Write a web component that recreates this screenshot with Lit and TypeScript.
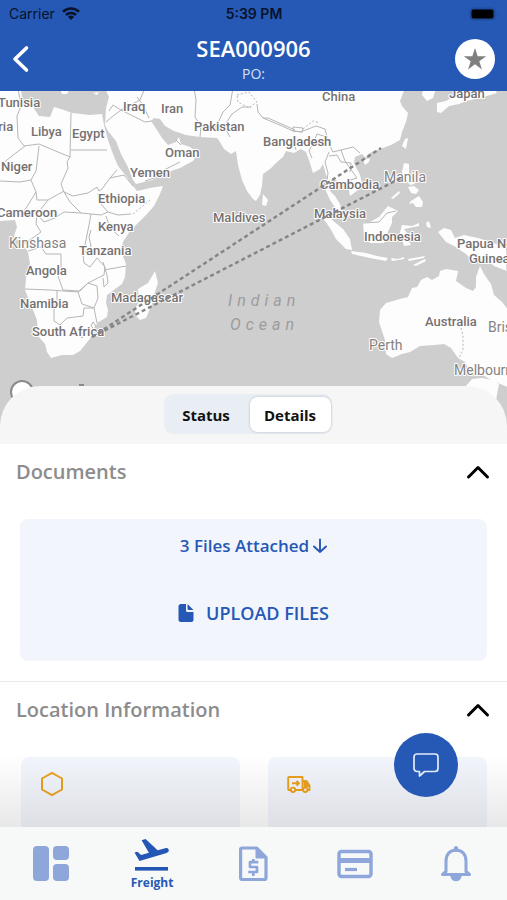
import { LitElement, html, css, svg } from "lit";
import { customElement, state } from "lit/decorators.js";

type Label = [text: string, x: number, y: number, kind?: string];

const LABELS: Label[] = [
  ["Tunisia", -2, 107],
  ["Algeria", -28, 131],
  ["Libya", 31, 136],
  ["Egypt", 72, 138],
  ["Iraq", 123, 111],
  ["Iran", 161, 113],
  ["Pakistan", 194, 131],
  ["Oman", 165, 157],
  ["Yemen", 130, 177],
  ["Niger", 1, 171],
  ["Ethiopia", 98, 203],
  ["Cameroon", -3, 217],
  ["Kenya", 98, 231],
  ["Maldives", 213, 222],
  ["China", 322, 101],
  ["Japan", 449, 98],
  ["Bangladesh", 263, 146],
  ["Cambodia", 320, 189],
  ["Manila", 384, 182, "city"],
  ["Malaysia", 314, 218],
  ["Indonesia", 364, 241],
  ["Kinshasa", 9, 248, "city"],
  ["Tanzania", 79, 255],
  ["Angola", 26, 275],
  ["Namibia", 20, 308],
  ["South Africa", 32, 336],
  ["Madagascar", 111, 302],
  ["Papua New", 457, 248],
  ["Guinea", 469, 263],
  ["Australia", 425, 326],
  ["Brisbane", 488, 332, "city"],
  ["Perth", 369, 350, "city"],
  ["Melbourne", 454, 375, "city"],
  ["Indian", 228, 306, "ocean"],
  ["Ocean", 230, 330, "ocean"],
];

const LAND = [
  // Africa
  "M0 88H21L22 100 33 107 39 116 50 117 54 107 64 110 72 113 90 115 102 114 104 125 108 140 113 154 118 166 127 177 133 186 137 191 150 188 163 186 160 194 154 206 147 214 130 231 123 242 121 251 126 264 125 277 122 284 107 295 106 303 108 310 107 317 97 323 94 332 89 340 80 351 73 355 62 355 51 358 47 352 45 344 38 336 37 320 31 305 25 290 26 278 30 264 28 252 22 244 14 236 17 227 15 220 0 221Z",
  // Arabia and Asia
  "M105 88H405L400 101 402 106 408 113 406 122 402 132 400 140 391 145 383 148 374 151 368 154 366 158 362 154 355 157 354 163 360 175 362 183 358 190 350 196 349 190 345 184 338 181 333 179 330 182 330 191 335 196 340 204 342 212 336 209 330 200 326 191 327 178 323 164 320 169 313 173 309 160 306 152 301 149 294 153 286 151 283 157 276 163 270 169 263 174 262 186 260 195 256 201 253 199 247 191 242 180 238 165 236 151 231 154 224 149 220 142 217 138 200 137 186 135 174 131 165 126 160 119 154 118 151 121 157 130 162 138 168 145 176 142 179 137 181 144 190 147 198 153 193 161 180 168 168 172 152 180 136 184 133 180 128 167 121 154 116 141 108 131 105 125 106 108 109 97Z",
  // Madagascar
  "M155 271L158 283 155 292 152 304 146 318 140 320 136 316 135 309 139 302 138 289 148 283Z",
  // Sri Lanka
  "M263 194L268 200 266 206 262 205Z",
  // Taiwan, Hainan, Korea, Japan
  "M405 139L408 138 406 149 402 146Z",
  "M363 160L370 158 369 162 365 165Z",
  "M423 88H436L433 98 427 101 422 95Z",
  "M437 103L446 101 453 97 463 94 480 92 494 88 497 93 480 98 466 101 459 104 449 106 441 113 437 112Z",
  // Philippines
  "M404 163L409 164 409 176 415 184 410 185 404 178 402 172Z",
  "M408 187L414 186 419 190 416 194 411 193Z",
  "M411 201L419 196 423 202 422 207 416 207 413 203 409 204Z",
  "M391 198L399 191 400 193 393 199Z",
  // Borneo, Sumatra, Java
  "M363 222L370 222 379 217 388 206 398 211 392 217 392 223 386 236 384 243 370 243 364 236Z",
  "M322 217L331 219 343 229 350 239 352 250 346 249 336 239 330 228Z",
  "M351 251L366 253 377 256 388 258 386 261 370 258 352 254Z",
  "M391 258L398 259 404 257 404 259 392 261Z",
  "M408 259L425 256 424 258 409 261Z",
  "M413 265L425 259 426 261 416 266Z",
  // Sulawesi and the Moluccas
  "M402 225L412 226 419 223 419 226 404 229 408 234 413 232 407 238 411 245 404 246 402 239 398 240Z",
  "M426 223L429 221 431 228 427 227Z",
  // New Guinea
  "M438 232L444 228 451 230 455 238 464 235 478 238 494 243 507 250V271L494 266 486 259 472 260 466 254 454 246 446 242Z",
  // Australia
  "M380 310L386 303 400 299 408 297 412 288 417 287 421 280 427 277 432 280 439 276 440 271 446 269 458 271 456 281 466 288 473 291 476 287 476 277 480 266 484 274 488 280 491 284 494 295 502 302 510 312V388L493 381 481 374 470 371 465 362 458 358 451 348 444 344 434 345 420 346 410 352 402 354 392 358 386 354 385 340 379 322Z",
  // Tasmania
  "M466 386L472 379 482 378 493 380 499 384 496 400 480 402Z",
];

const BORDERS = [
  "M18 88L21 106 17 116 18 138 24 146 39 144 70 157 71 113",
  "M71 150H107M70 157L67 162 68 168 61 184 64 192 70 202 81 213 91 214 89 225 84 250",
  "M25 146L3 163M39 146L36 171 31 180 20 182 0 181M31 180L36 192 37 200 48 200 64 191",
  "M64 192L73 196 88 193 97 187 99 191 102 189 110 178 117 170M110 178L124 175 133 186",
  "M36 192L28 205 20 217M48 200L37 214 44 222 55 218 64 212 81 213M37 214L36 224 41 232 34 237 24 244",
  "M91 214L101 215 108 212 100 203 98 193M108 212L118 215 131 214M106 216L110 228 119 236",
  "M91 230L89 237 91 246 83 254 84 263 90 267 97 258 105 267 104 275 88 283 80 291 63 290 58 276 61 269 61 254 46 254 41 247 28 251",
  "M25 289L50 290 78 292 88 283M57 291V304L54 305V321L60 325 67 318 83 316 84 308 94 308 97 323",
  "M78 292L82 304 94 308 98 298 97 286 88 283M104 270L126 266M103 262L107 275 108 283 104 287 103 278",
  "M93 322L96 326 94 329 91 326ZM80 334L86 333 82 338Z",
  "M106 122L113 116 121 110 113 105 109 111M121 110L145 122 152 121M121 110L140 100 145 88M149 118L143 105 137 97",
  "M194 88L196 100 195 117 201 126 200 137M201 126L216 127 223 112 230 105 233 88M230 137L224 126 232 114 242 107 251 107",
  "M145 181L160 176 168 172M158 173L180 162M176 140L181 145",
  "M257 104L258 112 263 118 282 126 293 131 303 132M263 118L268 118 295 130M293 127L303 128 302 132 293 131V127M293 139L296 150",
  "M303 131L316 126 325 129 327 137 317 134 313 143 309 151 312 158M327 137L329 144 333 152 341 150 353 147 360 153",
  "M329 152L325 162 328 173 326 187M329 156L337 155 341 162 351 163 350 172M341 150L345 161 352 171 357 178 350 180",
  "M363 223L379 222 387 213 396 211M507 244V270",
];

@customElement("freight-map")
export class FreightMap extends LitElement {
  static styles = css`
    :host { display: block; height: 340px; background: #cecece; }
    .map { display: block; width: 100%; height: 100%; }
    .land { fill: #fdfdfd; }
    .border { fill: none; stroke: #b6b6b6; stroke-width: 1; stroke-linejoin: round; }
    .disputed { stroke-dasharray: 2 2; }
    .route { stroke: #858585; stroke-width: 2.4; stroke-dasharray: 4 3; }
    .label {
      font: 500 13px Roboto, sans-serif; fill: #757171;
      stroke: #fff; stroke-width: 2px; stroke-linejoin: round; paint-order: stroke;
    }
    .city { font-weight: 400; font-size: 14px; fill: #858282; }
    .ocean { font-weight: 400; font-size: 16px; font-style: italic; letter-spacing: 5px; fill: #9c9c9c; stroke: none; }
    .logo { fill: #fff; stroke: #8a8a8a; stroke-width: 2; }
  `;
  render() {
    return html`<svg class="map" viewBox="0 91 507 340" preserveAspectRatio="xMidYMin slice" role="img" aria-label="Shipment route map">
      ${LAND.map((d) => svg`<path class="land" d=${d} />`)}
      <path class="land" d="M60 88h10l-3 6h-5zM93 93l6-1-2 3z" />
      ${BORDERS.map((d) => svg`<path class="border" d=${d} />`)}
      <path class="border disputed" d="M237 95l12-3 8 10-8 6-11-6zM303 129l10-8 7 2M150 200l-17 14M461 328l2 8v14l-4 8" />
      <circle class="logo" cx="22" cy="392" r="11" />
      <path d="M79 385h5" stroke="#8a8a8a" stroke-width="2" />
      ${LABELS.map(([t, x, y, k]) => svg`<text class="label ${k ?? ""}" x=${x} y=${y}>${t}</text>`)}
      <path class="route" d="M92 337L381 148" />
      <path class="route" d="M92 337L401 178" />
    </svg>`;
  }
}

const chevronUp = html`<svg width="24" height="16" viewBox="0 0 24 16" aria-hidden="true">
  <path d="M2.5 13L12 3.5 21.5 13" fill="none" stroke="#000" stroke-width="3" stroke-linecap="round" stroke-linejoin="round" /></svg>`;

const NAV = [
  { name: "Dashboard", label: "", icon: html`<svg width="36" height="36" viewBox="0 0 36 36" fill="#8ea6d9">
      <rect x="0" y="0" width="16" height="35" rx="4" /><rect x="20" y="0" width="16" height="14" rx="4" /><rect x="20" y="18" width="16" height="17" rx="4" /></svg>` },
  { name: "Freight", label: "Freight", icon: html`<svg width="36" height="34" viewBox="0 0 36 34" fill="#2456b6">
      <path d="M0.5 14.5l3-.8 3.6 3.2 7.8-2.1L7.6 2.2 11.600 1l12 11.200 7.600-2c1.700-.45 3.100.2 3.500 1.600.4 1.400-.5 2.600-2.100 3.100L5.500 23z" />
      <rect x="1" y="29" width="33" height="3.600" /></svg>` },
  { name: "Invoices", label: "", icon: html`<svg width="30" height="36" viewBox="0 0 30 36" fill="none" stroke="#8ea6d9" stroke-width="3.200" stroke-linejoin="round">
      <path d="M2.600 3.500a1.500 1.500 0 0 1 1.500-1.500H18.500L28 11.500V32a1.500 1.500 0 0 1-1.500 1.500H4.100A1.500 1.500 0 0 1 2.600 32z" />
      <path d="M18 2v10h10z" fill="#8ea6d9" stroke-width="1" />
      <path d="M20.300 16.200H12v4.800h7v5H10.200M15.300 13v3M15.300 26v4" stroke-width="2.700" stroke-linejoin="round" /></svg>` },
  { name: "Payments", label: "", icon: html`<svg width="36" height="36" viewBox="0 0 36 36">
      <rect x="2" y="5.500" width="32" height="25" rx="2.500" fill="none" stroke="#8ea6d9" stroke-width="3.400" />
      <path d="M2 12h32v5H2z" fill="#8ea6d9" /><path d="M8 23.500h12" stroke="#8ea6d9" stroke-width="3.200" /></svg>` },
  { name: "Notifications", label: "", icon: html`<svg width="32" height="36" viewBox="0 0 32 36" fill="none" stroke="#8ea6d9" stroke-width="3" stroke-linejoin="round">
      <path d="M6 25.500V15C6 8.500 10 4 16 4s10 4.500 10 11v10.500l3.500 3h-27z" /><path d="M16 4V2" stroke-linecap="round" stroke-width="4" />
      <path d="M10.500 30a5.500 5.200 0 0 0 11 0z" fill="#8ea6d9" stroke="none" /></svg>` },
];

@customElement("app-root")
export class AppRoot extends LitElement {
  @state() private tab = "Details";

  static styles = css`
    :host {
      display: flex; flex-direction: column; height: 100vh; background: #fff;
      font-family: "Open Sans", "Noto Sans", sans-serif; color: #111;
    }
    * { box-sizing: border-box; }
    button { font: inherit; color: inherit; border: 0; padding: 0; background: none; cursor: pointer; }
    svg { display: block; flex: none; }
    .header { flex: none; background: #2658b5; color: #fff; }
    .status { display: grid; grid-template-columns: 1fr auto 1fr; align-items: center; height: 27px; padding: 0 8px 0 9px; color: #07132b; font: 400 14px Inter, sans-serif; }
    .carrier { display: flex; align-items: center; gap: 7px; }
    .time { font-weight: 600; }
    .battery { justify-self: end; }
    .bar { display: grid; grid-template-columns: 40px 1fr 40px; align-items: center; height: 64px; padding: 0 12px; }
    .back { display: flex; align-items: center; height: 40px; }
    .titles { padding-top: 2px; text-align: center; }
    .title { margin: 0; font-size: 22px; line-height: 26px; font-weight: 600; }
    .po { margin: 2px 0 0; font-size: 14px; line-height: 22px; color: #d7e1f5; }
    .star { display: grid; place-items: center; width: 40px; height: 40px; border-radius: 50%; background: #fff; }
    .content { flex: 1; min-height: 0; overflow-y: auto; scrollbar-width: none; }
    .sheet { position: relative; margin-top: -45px; }
    .tabs { display: flex; justify-content: center; height: 58px; padding: 8px 12px 0 0; background: #f6f6f7; border-radius: 40px 40px 0 0; }
    .segment { display: flex; gap: 3px; height: 40px; padding: 3px 1px 2px 2px; border-radius: 9px; background: #e9edf4; }
    .tab { min-width: 81px; padding: 0 14px; border-radius: 8px; font-size: 15px; font-weight: 700; }
    .tab.on { background: #fff; box-shadow: 0 0 3px rgba(0, 0, 0, 0.2); }
    .section { background: #fff; }
    .section + .section { border-top: 1px solid #e9e9e9; }
    .head { display: flex; align-items: center; justify-content: space-between; height: 55px; padding: 0 17px 0 16px; }
    .section h2 { margin: 0; font-size: 20px; line-height: 24px; font-weight: 600; color: #8c8c8c; }
    .upload { display: flex; flex-direction: column; align-items: center; gap: 43px; height: 142px; margin: 20px 20px 20px; padding-top: 15px; border-radius: 8px; background: #f3f5fc; color: #2658b5; font-size: 17px; line-height: 24px; font-weight: 600; }
    .link { display: flex; align-items: center; gap: 4px; }
    .link.wide { gap: 12px; font-size: 18px; }
    .cards { display: grid; grid-template-columns: 1fr 1fr; gap: 28px; padding: 20px 20px 24px 21px; }
    .card { height: 160px; padding: 14px 19px; border-radius: 8px; background: #f3f5fc; }
    .nav { position: relative; flex: none; display: grid; grid-template-columns: repeat(5, 1fr); height: 73px; background: #f7f8f8; }
    .nav::before { content: ""; position: absolute; left: 0; right: 0; bottom: 100%; height: 72px; background: linear-gradient(transparent, rgba(0, 0, 0, 0.09)); pointer-events: none; }
    .item { display: flex; flex-direction: column; align-items: center; justify-content: center; gap: 4px; text-decoration: none; color: #2658b5; font-size: 12px; line-height: 14px; font-weight: 700; }
    .chat { position: absolute; right: 49px; bottom: 103px; display: grid; place-items: center; width: 64px; height: 64px; border-radius: 50%; background: #2658b5; }
  `;

  render() {
    return html`
      <header class="header">
        <div class="status">
          <span class="carrier">Carrier
            <svg width="18" height="13" viewBox="0 0 18 13" fill="none" stroke="#07132b" stroke-width="2.600">
              <path d="M1 4.700a11.500 11.500 0 0 1 16 0M4 8a7.300 7.300 0 0 1 10 0" /><path d="M9 13L6 9.900a4.300 4.300 0 0 1 6 0z" fill="#07132b" stroke="none" /></svg>
          </span>
          <span class="time">5:39 PM</span>
          <svg class="battery" width="30" height="14" viewBox="0 0 30 14"><rect x="0.500" y="0.500" width="26" height="13" rx="4" fill="#1f4c9c" />
            <rect x="2.500" y="2.500" width="22" height="9" rx="2" fill="#000" /><path d="M28 5v4q1.500-2 0-4" fill="#1d4690" /></svg>
        </div>
        <div class="bar">
          <button class="back" aria-label="Back"><svg width="18" height="28" viewBox="0 0 18 28">
            <path d="M14.500 3L3 14l11.500 11" fill="none" stroke="#fff" stroke-width="3.600" stroke-linecap="round" stroke-linejoin="round" /></svg></button>
          <div class="titles"><h1 class="title">SEA000906</h1><p class="po">PO:</p></div>
          <button class="star" aria-label="Favorite"><svg width="24" height="24" viewBox="0 0 24 24">
            <path d="M12 1l2.700 8.200h8.500l-6.900 5 2.700 8.200L12 17.300 5 22.400l2.700-8.200-6.900-5h8.500z" fill="#808080" /></svg></button>
        </div>
      </header>
      <main class="content">
        <freight-map></freight-map>
        <div class="sheet">
          <div class="tabs"><div class="segment" role="tablist">
            ${["Status", "Details"].map((t) => html`<button class="tab ${this.tab === t ? "on" : ""}" role="tab"
              aria-selected=${this.tab === t} @click=${() => (this.tab = t)}>${t}</button>`)}
          </div></div>
          <section class="section">
            <div class="head"><h2>Documents</h2><button aria-label="Collapse documents">${chevronUp}</button></div>
            <div class="upload">
              <button class="link">3 Files Attached<svg width="14" height="16" viewBox="0 0 14 16">
                <path d="M7 1.500v12.500M1 8.500l6 5.500 6-5.500" fill="none" stroke="#2658b5" stroke-width="1.900" stroke-linecap="round" stroke-linejoin="round" /></svg></button>
              <button class="link wide"><svg width="16" height="20" viewBox="0 0 16 20" fill="#2658b5">
                <path d="M3 1h5v6.500a1.500 1.500 0 0 0 1.500 1.500H15.500V16.500a2.500 2.500 0 0 1-2.500 2.500H3A2.500 2.500 0 0 1 .5 16.500V3.500A2.500 2.500 0 0 1 3 1z" /><path d="M9.500 1l6 6h-4.500a1.500 1.500 0 0 1-1.500-1.500z" /></svg>UPLOAD FILES</button>
            </div>
          </section>
          <section class="section">
            <div class="head"><h2>Location Information</h2><button aria-label="Collapse location information">${chevronUp}</button></div>
            <div class="cards">
              <div class="card"><svg width="24" height="26" viewBox="0 0 24 26">
                <path d="M12 1.800L22 7.500v11L12 24.200 2 18.500v-11z" fill="none" stroke="#eba11f" stroke-width="2" stroke-linejoin="round" /></svg></div>
              <div class="card"><svg width="24" height="26" viewBox="0 0 24 26" fill="none" stroke="#eba11f" stroke-width="1.900" stroke-linejoin="round">
                <path d="M3.500 19H2a.8.800 0 0 1-.8-.8V6.800A.8.800 0 0 1 2 6h13.500v13H8.500M15.500 10h4l3 4.500V19h-1.500" />
                <path d="M17.500 11h2l2.500 4h-4.500z" fill="#eba11f" /><circle cx="6" cy="18.800" r="2.200" /><circle cx="18.300" cy="18.800" r="2.200" />
                <path d="M5 12.300h7M9.500 10l2.500 2.300-2.500 2.300" /></svg></div>
            </div>
          </section>
        </div>
      </main>
      <nav class="nav">
        <button class="chat" aria-label="Chat"><svg width="28" height="26" viewBox="0 0 28 26">
          <path d="M5 2h18a3 3 0 0 1 3 3v11.500a3 3 0 0 1-3 3H12.500L7.500 24v-4.500H5a3 3 0 0 1-3-3V5a3 3 0 0 1 3-3z" fill="none" stroke="#e4ecfa" stroke-width="1.700" stroke-linejoin="round" /></svg></button>
        ${NAV.map((n) => html`<a class="item" href="#" aria-label=${n.name}>${n.icon}${n.label ? html`<span>${n.label}</span>` : ""}</a>`)}
      </nav>`;
  }
}
